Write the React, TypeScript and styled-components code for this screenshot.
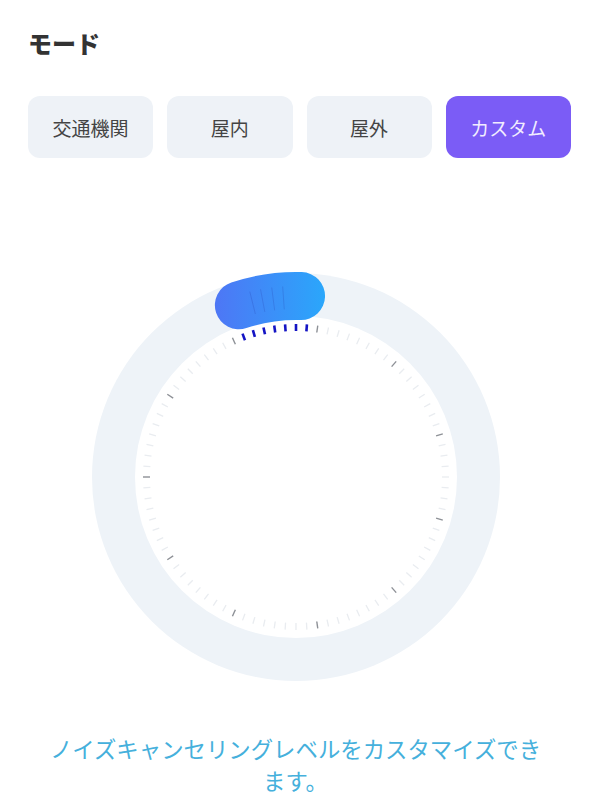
import React from 'react';
import styled, { createGlobalStyle, css } from 'styled-components';

const GlobalStyle = createGlobalStyle`
  html, body {
    margin: 0;
    padding: 0;
    background: #ffffff;
  }
  body {
    font-family: "Noto Sans CJK JP", "Noto Sans", sans-serif;
  }
`;

const Page = styled.div`
  width: 591px;
  height: 810px;
  padding: 27px 20px 0 28px;
  box-sizing: border-box;
  overflow: hidden;
`;

const Title = styled.h2`
  margin: 0;
  font-size: 24px;
  line-height: 32px;
  font-weight: 900;
  color: #333333;
`;

const ModeRow = styled.div`
  display: grid;
  grid-template-columns: repeat(4, 1fr);
  gap: 14px;
  margin-top: 37px;
`;

const ModeButton = styled.button<{ active?: boolean }>`
  height: 62px;
  border: none;
  border-radius: 12px;
  background: #eef2f7;
  color: #444444;
  font-family: inherit;
  font-size: 19px;
  padding: 0;
  cursor: pointer;
  ${(props) =>
    props.active &&
    css`
      background: #7b5cf6;
      color: #f1ecff;
    `}
`;

const DialBox = styled.div`
  display: flex;
  justify-content: center;
  margin: 109px 0 0 -28px;
  width: 591px;
`;

const Caption = styled.p`
  margin: 45px auto 0;
  width: 505px;
  transform: translateX(-4px);
  text-align: center;
  font-size: 22.4px;
  line-height: 32px;
  color: #45b0dc;
`;

const modes = ['交通機関', '屋内', '屋外', 'カスタム'];

const C = 210;
const TICKS = 88;

const polar = (r: number, deg: number) => {
  const a = (deg * Math.PI) / 180;
  return { x: C + r * Math.sin(a), y: C - r * Math.cos(a) };
};

const arcPath = (r: number, from: number, to: number) => {
  const p1 = polar(r, from);
  const p2 = polar(r, to);
  return `M ${p1.x} ${p1.y} A ${r} ${r} 0 0 1 ${p2.x} ${p2.y}`;
};

const Dial = () => {
  const ticks = Array.from({ length: TICKS }, (_, i) => {
    const deg = 270 + (i * 360) / TICKS;
    const major = i % 8 === 0;
    const active = i > 16 && i < 24;
    const a = polar(146, deg);
    const b = polar(153, deg);
    let color = '#e9ecf0';
    let width = 1.3;
    if (major) {
      color = '#8d9096';
      width = 1.4;
    }
    if (active) {
      color = '#1414c4';
      width = 2.6;
    }
    return <line key={i} x1={a.x} y1={a.y} x2={b.x} y2={b.y} stroke={color} strokeWidth={width} />;
  });

  // faint grip lines on the knob
  const grips = [-14, -10.7, -7.3, -4].map((deg) => {
    const a = polar(168, deg);
    const b = polar(191, deg);
    return (
      <line key={deg} x1={a.x} y1={a.y} x2={b.x} y2={b.y} stroke="rgba(35, 60, 170, 0.22)" strokeWidth={1} />
    );
  });

  return (
    <svg width={420} height={420} viewBox="0 0 420 420">
      <defs>
        <linearGradient id="knob" gradientUnits="userSpaceOnUse" x1={128} y1={0} x2={240} y2={0}>
          <stop offset="0" stopColor="#4e76f5" />
          <stop offset="1" stopColor="#2aa7fb" />
        </linearGradient>
      </defs>
      <circle cx={C} cy={C} r={204} fill="#eef3f8" />
      <circle cx={C} cy={C} r={161} fill="#ffffff" />
      {ticks}
      <path d={arcPath(181, -18.4, 1.6)} stroke="url(#knob)" strokeWidth={48} strokeLinecap="round" fill="none" />
      {grips}
    </svg>
  );
};

const App = () => {
  return (
    <Page>
      <GlobalStyle />
      <Title>モード</Title>
      <ModeRow>
        {modes.map((m) => (
          <ModeButton key={m} active={m === 'カスタム'}>
            {m}
          </ModeButton>
        ))}
      </ModeRow>
      <DialBox>
        <Dial />
      </DialBox>
      <Caption>ノイズキャンセリングレベルをカスタマイズできます。</Caption>
    </Page>
  );
};

export default App;
